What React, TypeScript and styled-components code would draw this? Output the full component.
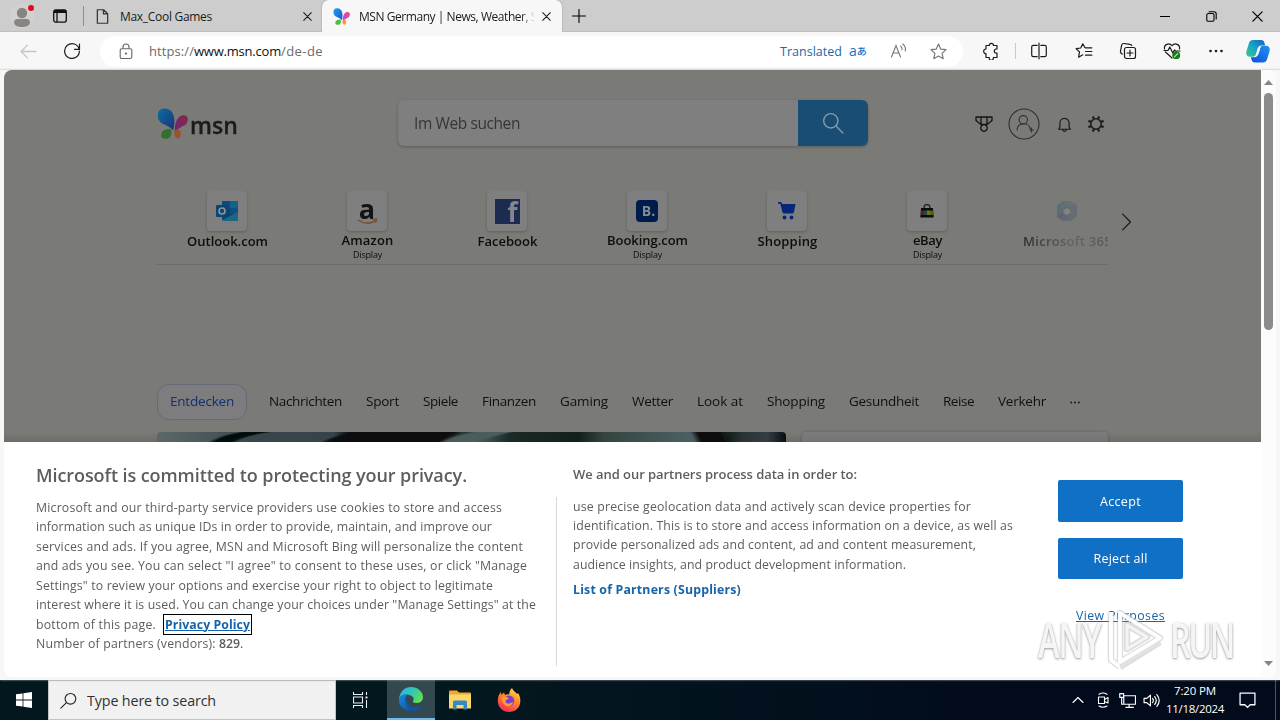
import React, { useLayoutEffect, useRef } from "react";
import styled, { createGlobalStyle } from "styled-components";

const Global = createGlobalStyle`
  * { box-sizing: border-box; }
  body { margin: 0; background: #f7f7f7; font-family: "Open Sans", "Noto Sans", sans-serif; }
  svg { display: block; flex: none; }
`;

const FitSpan = styled.span`
  display: inline-block;
  white-space: pre;
  text-decoration: inherit;
`;

/* Tracks its text in or out so that it fills exactly the given width. */
function Fit({ w, scale = 1, children }: { w: number; scale?: number; children: string }) {
  const ref = useRef<HTMLSpanElement>(null);
  useLayoutEffect(() => {
    const el = ref.current;
    if (!el) return;
    el.style.letterSpacing = "0px";
    const natural = el.getBoundingClientRect().width / scale;
    el.style.letterSpacing = `${(w - natural) / children.length}px`;
  }, [w, scale, children]);
  return <FitSpan ref={ref}>{children}</FitSpan>;
}

const Screen = styled.div`
  width: 1280px;
  height: 720px;
  display: flex;
  flex-direction: column;
  overflow: hidden;
`;

/* ---------- browser chrome ---------- */
const TabStrip = styled.div`
  height: 32px;
  flex: none;
  display: flex;
  background: #cdcdcd;
  box-shadow: inset 0 -1px 0 #bfbfbf;
`;
const Cell = styled.div<{ $w: number }>`
  width: ${(p) => p.$w}px;
  flex: none;
  display: flex;
  align-items: center;
  justify-content: center;
`;
const Tab = styled.div<{ $w: number; $active?: boolean }>`
  width: ${(p) => p.$w}px;
  flex: none;
  display: flex;
  align-items: center;
  padding-left: ${(p) => (p.$active ? 11 : 4)}px;
  padding-right: ${(p) => (p.$active ? 11 : 10)}px;
  font-size: 12px;
  color: #1b1b1b;
  border-radius: 7px 7px 0 0;
  background: ${(p) => (p.$active ? "#f7f7f7" : "transparent")};
  box-shadow: ${(p) => (p.$active ? "0 0 2px #999" : "none")};
  clip-path: inset(-3px -3px 0 -3px);
`;
const TabTitle = styled.div<{ $fade?: boolean }>`
  flex: 1;
  margin-left: ${(p) => (p.$fade ? 9 : 10)}px;
  overflow: hidden;
  white-space: nowrap;
  mask-image: ${(p) => (p.$fade ? "linear-gradient(90deg,#000 162px,transparent 176px)" : "none")};
`;
const Divider = styled.div<{ $h: number; $pull?: number }>`
  width: 1px;
  height: ${(p) => p.$h}px;
  margin-left: ${(p) => -(p.$pull ?? 0)}px;
  align-self: center;
  background: ${(p) => (p.$pull ? "#c9c9c9" : "#8f8f8f")};
`;
const Spacer = styled.div`
  flex: 1;
`;
const Toolbar = styled.div`
  height: 38px;
  flex: none;
  display: flex;
  background: #f7f7f7;
  align-items: center;
  color: #1b1b1b;
`;
const Address = styled.div`
  width: 863px;
  height: 31px;
  display: flex;
  align-items: center;
  border-radius: 16px;
  background: #fff;
  padding-left: 18px;
  font-size: 13px;
  color: #6b6b6b;
`;
const Url = styled.div`
  margin-left: 15px;
  white-space: nowrap;
  b { font-weight: 400; color: #111; }
`;
const Translated = styled.div`
  font-size: 12.5px;
  color: #1f66a8;
`;
const TranslateMark = styled.div`
  width: 19px;
  margin-left: 7px;
  font-size: 14px;
  line-height: 16px;
  color: #1672c4;
  white-space: nowrap;
  display: flex;
  align-items: center;
  span { font-family: "Noto Sans CJK JP", sans-serif; font-size: 10px; font-weight: 500; }
`;

/* ---------- page ---------- */
const Viewport = styled.div`
  position: relative;
  width: 1272px;
  height: 607px;
  margin-left: 4px;
  flex: none;
  display: flex;
  border-radius: 8px;
  overflow: hidden;
  background: #fff;
`;
const Frame = styled.div`
  flex: none;
  height: 610px;
  background: #f7f7f7;
  filter: drop-shadow(0 0 1px #aaa);
`;
const Document = styled.div`
  width: 1257px;
  display: flex;
  flex-direction: column;
`;
const Dimmed = styled.div`
  height: 372px;
  background: linear-gradient(#7a7a76 0 362px, #6c6c69 372px);
  padding: 30px 0 0 153px;
  display: flex;
  flex-direction: column;
  overflow: hidden;
`;
const Header = styled.div`
  display: flex;
  height: 46px;
  align-items: center;
`;
const Logo = styled.div`
  width: 241px;
  display: flex;
  align-items: center;
  color: #1c1c1c;
  font-size: 23px;
  font-weight: 600;
  line-height: 32px;
`;
const Wordmark = styled.div`
  margin: 4px 0 0 2px;
  -webkit-text-stroke: 0.3px #1c1c1c;
`;
const SearchBox = styled.div`
  width: 470px;
  height: 46px;
  display: flex;
  border-radius: 6px;
  overflow: hidden;
  background: #7f7f7f;
  box-shadow: 0 1px 3px rgba(0, 0, 0, 0.25);
`;
const SearchText = styled.div`
  width: 400px;
  padding-left: 16px;
  line-height: 47px;
  font-size: 15.5px;
  color: #363636;
`;
const SearchButton = styled.div`
  width: 70px;
  background: #1a4d73;
  display: flex;
  align-items: center;
  justify-content: center;
`;
const Tools = styled.div`
  display: flex;
  margin-left: 100px;
  height: 46px;
  padding-top: 2px;
`;
const Links = styled.div`
  display: flex;
  margin-top: 45px;
  height: 74px;
  flex: none;
  width: 951px;
  border-bottom: 1px solid #6b6b68;
`;
const LinkItem = styled.div<{ $faded?: boolean }>`
  width: 140px;
  flex: none;
  display: flex;
  flex-direction: column;
  align-items: center;
  color: #0d0d0d;
  mask-image: ${(p) => (p.$faded ? "linear-gradient(90deg,rgba(0,0,0,.75) 20px,rgba(0,0,0,.2) 75px,rgba(0,0,0,.3) 112px)" : "none")};
`;
const LinkRow = styled.div`
  display: flex;
  width: 951px;
  overflow: hidden;
  flex: none;
`;
const Tile = styled.div<{ $plain?: boolean }>`
  width: 40px;
  height: 40px;
  border-radius: 4px;
  display: flex;
  align-items: center;
  justify-content: center;
  background: ${(p) => (p.$plain ? "transparent" : "#7f7f7f")};
  box-shadow: ${(p) => (p.$plain ? "none" : "0 1px 3px rgba(0,0,0,.22)")};
`;
const LinkName = styled.div<{ $ad?: boolean }>`
  font-size: 13px;
  font-weight: 600;
  line-height: 18px;
  margin: ${(p) => (p.$ad ? 0 : 1)}px 0 0 1px;
  white-space: nowrap;
`;
const AdLabel = styled.div`
  font-size: 9px;
  line-height: 12px;
  margin-left: 1px;
`;
const Next = styled.div`
  margin-left: 9px;
  padding-top: 22px;
`;
const Nav = styled.div`
  display: flex;
  flex: none;
  align-items: center;
  margin-top: 119px;
  height: 36px;
  gap: 24px;
  font-size: 13.5px;
  line-height: 20px;
  color: #101010;
`;
const Pill = styled.div`
  width: 90px;
  height: 36px;
  margin-right: -2px;
  display: flex;
  align-items: center;
  justify-content: center;
  border: 1px solid #666b77;
  border-radius: 12px;
  background: #7d7d7f;
  color: #14306e;
`;
const NavText = styled.div`
  padding-bottom: 2px;
`;
const Cards = styled.div`
  display: flex;
  flex: none;
  gap: 16px;
  margin-top: 12px;
`;
const Photo = styled.div`
  width: 629px;
  height: 30px;
  border-radius: 4px;
  overflow: hidden;
`;
const Card = styled.div`
  width: 306px;
  height: 30px;
  border-radius: 4px;
  background: linear-gradient(#7c7c7c, #737373 10px);
  box-shadow: 0 0 3px rgba(0, 0, 0, 0.25);
`;

/* ---------- consent banner ---------- */
const Consent = styled.div`
  flex: 1;
  background: #fff;
  display: flex;
  padding: 20px 0 0 32px;
  color: #5d5d5d;
  font-size: 12.3px;
`;
const Left = styled.div`
  width: 520px;
`;
const Title = styled.div`
  font-size: 18px;
  font-weight: 600;
  line-height: 26px;
  margin-bottom: 10px;
`;
const Line = styled.div`
  height: 19.45px;
  line-height: 19.45px;
  white-space: nowrap;
  display: flex;
`;
const Rule = styled.div`
  width: 1px;
  height: 169px;
  margin-top: 35px;
  background: #d8d8d8;
`;
const Right = styled.div`
  width: 501px;
  padding-left: 16px;
`;
const Subtitle = styled.div`
  font-size: 13px;
  font-weight: 600;
  line-height: 24px;
  margin-bottom: 10.5px;
`;
const PolicyLink = styled.a`
  height: 21px;
  line-height: 19px;
  margin: -1px 0 0 7px;
  padding: 0 1px;
  border: 1px solid #000;
  color: #1564ab;
  font-weight: 700;
  text-decoration: underline;
`;
const PartnersLink = styled.a`
  display: block;
  margin-top: 7px;
  line-height: 18px;
  color: #1564ab;
  font-weight: 700;
`;
const Strong = styled.b`
  font-weight: 600;
`;
const Actions = styled.div`
  width: 125px;
  padding-top: 18px;
  display: flex;
  flex-direction: column;
  align-items: center;
`;
const ActionButton = styled.div<{ $h: number }>`
  width: 125px;
  height: ${(p) => p.$h}px;
  margin-bottom: 16px;
  border-radius: 2px;
  background: #1070c6;
  color: #fff;
  font-size: 12.5px;
  display: flex;
  align-items: center;
  justify-content: center;
`;
const Purposes = styled.a`
  margin-top: 12px;
  line-height: 18px;
  color: #1564ab;
  text-decoration: underline;
`;
const Scrollbar = styled.div`
  width: 15px;
  background: #fcfcfc;
  display: flex;
  flex-direction: column;
  align-items: center;
  padding: 10px 0 11px;
`;
const Thumb = styled.div`
  width: 9px;
  height: 237px;
  margin-top: 8px;
  border-radius: 5px;
  background: #8b8b8b;
`;

const Watermark = styled.div`
  position: absolute;
  left: 1034px;
  top: 537px;
  display: flex;
  align-items: center;
  width: 194px;
  height: 66px;
  justify-content: space-between;
  pointer-events: none;
`;
const MarkWord = styled.div`
  width: 62px;
  font-size: 48px;
  line-height: 60px;
  font-weight: 600;
  color: rgba(255, 255, 255, 0.9);
  text-shadow: 0 1px 3px #999, 0 0 1px #bbb;
  transform: scaleX(0.68);
  transform-origin: left;
  white-space: nowrap;
`;

/* ---------- taskbar ---------- */
const Taskbar = styled.div`
  height: 40px;
  flex: none;
  display: flex;
  background: linear-gradient(90deg, #03171f 0, #03171f 40%, #020b1b 80%);
  color: #fff;
`;
const TaskSearch = styled.div`
  width: 288px;
  display: flex;
  align-items: center;
  padding-left: 11px;
  background: #f1f1f1;
  border: 1px solid #c4c4c4;
  color: #303030;
  font-size: 14.3px;
`;
const SearchLabel = styled.div`
  margin-left: 10px;
`;
const RunningApp = styled(Cell)`
  background: #34484f;
  border-bottom: 2px solid #76b9ed;
`;
const Clock = styled.div`
  width: 64px;
  display: flex;
  flex-direction: column;
  align-items: center;
  font-size: 11.5px;
  line-height: 18px;
  padding-top: 2px;
`;
const EdgeLine = styled.div`
  width: 1px;
  margin-right: 4px;
  background: #4b535e;
`;

/* ---------- drawings ---------- */
const Stroke = ({ s = 16, w = 1.1, c = "currentColor", d, box = 16 }: { s?: number; w?: number; c?: string; d: string; box?: number }) => (
  <svg width={s} height={s} viewBox={`0 0 ${box} ${box}`} fill="none" stroke={c} strokeWidth={w} strokeLinecap="round" strokeLinejoin="round">
    <path d={d} />
  </svg>
);

const Butterfly = ({ w, id, dim }: { w: number; id: string; dim?: boolean }) => (
  <svg width={w} height={w} viewBox="0 0 30 30">
    <defs>
      <linearGradient id={`${id}a`} x1="0" y1="0" x2="0.8" y2="1">
        <stop offset="0" stopColor={dim ? "#0c6f9e" : "#16a3ee"} />
        <stop offset="1" stopColor={dim ? "#1a3580" : "#2558d8"} />
      </linearGradient>
      <linearGradient id={`${id}b`} x1="1" y1="0" x2="0" y2="1">
        <stop offset="0" stopColor={dim ? "#8e2444" : "#fa4878"} />
        <stop offset="1" stopColor={dim ? "#66297c" : "#c040d8"} />
      </linearGradient>
    </defs>
    <path d="M.8 7C.8 2 4.300.2 8 .5c6.500.5 8.800 6 8.800 12.500 0 3-.3 6-1.300 8.500C13 19 11 17.500 7 16 2.800 14.300.8 11 .8 7z" fill={`url(#${id}a)`} />
    <path d="M29.800 10.500c0-3-4-4.500-7.500-2.500-4 3-5 8-5 14 3-1 4-2.500 7-4 4-1.500 5.500-4 5.500-7.500z" fill={`url(#${id}b)`} />
    <path d="M4 26.500c0-4 4-6.500 9.500-6 1 3 .5 8-3 9-4 .8-6.500-.5-6.500-3z" fill={dim ? "#2f702a" : "#4cc03c"} />
    <path d="M16.500 23c1-2 4-3 6-1 1 3 .5 6.500-1.500 7.500-2.500.5-4.500-2-4.500-6.500z" fill={dim ? "#96542f" : "#ff9140"} />
  </svg>
);

const Close = ({ s = 9 }: { s?: number }) => <Stroke s={s} box={10} w={1.2} d="M.8.8l8.4 8.4M9.2.8L.8 9.2" />;

const Profile = () => (
  <svg width="32" height="28" viewBox="0 0 32 28">
    <circle cx="16" cy="14" r="12" fill="#d3d1d0" />
    <circle cx="16" cy="11" r="5.2" fill="#878583" />
    <path d="M8 20c0-2 2-3 3-3h10c1 0 3 1 3 3 0 4-4 5-8 5s-8-1-8-5z" fill="#878583" />
    <circle cx="25" cy="6" r="3" fill="#e00b1c" />
  </svg>
);

const Workspace = () => (
  <svg width="14" height="14" viewBox="0 0 14 14" fill="none" stroke="#111" strokeWidth="1.3">
    <rect x=".7" y=".9" width="12.6" height="12.2" rx="2" />
    <path d="M1 2.5h12" strokeWidth="3" />
    <path d="M4 3v10" />
  </svg>
);

const Reload = () => (
  <svg width="18" height="18" viewBox="0 0 18 18" fill="none" stroke="currentColor" strokeWidth="1.2" strokeLinecap="round">
    <path d="M16.2 7.3A7.4 7.4 0 1 0 16.4 9M16.5 2.2v5.2h-5" />
  </svg>
);

const Lock = () => (
  <svg width="16" height="17" viewBox="0 0 16 17" fill="none" stroke="#666" strokeWidth="1.1">
    <rect x="2.2" y="5.7" width="11.6" height="9.8" rx="1.6" />
    <path d="M5 5.5V4a3 3 0 0 1 6 0v1.5" />
    <circle cx="8" cy="10.6" r=".6" fill="#666" />
  </svg>
);

const starPath = "M8 1l2.1 4.7 5 .6-3.7 3.5 1 5L8 12.300 3.600 14.800l1-5L.9 6.300l5-.6z";

const ReadAloud = () => (
  <svg width="18" height="16" viewBox="0 0 18 16" fill="none" stroke="#777" strokeWidth="1.1" strokeLinecap="round">
    <path d="M1.500 14L6 2.500 10.500 14M3.200 10h5.600M10.500 3q2 1.500 1.500 4M12.700 1q3.500 2.500 2.600 7" />
  </svg>
);

const Puzzle = () => (
  <svg width="18" height="18" viewBox="-1 0 18 18" fill="none" stroke="currentColor" strokeWidth="1.2" strokeLinejoin="round">
    <path d="M3 3.500h3.300a2.100 2.100 0 1 1 4.200 0H14v3.500h-.6a2.100 2.100 0 1 0 0 4.200H14v4.300h-3.700a2.100 2.100 0 1 1-4 0H3v-3.800a2.350 2.350 0 0 1 0-4.700z" />
  </svg>
);

const Split = () => (
  <Stroke s={18} box={18} w={1.2} d="M7.200 3.300H3.300a1.600 1.600 0 0 0-1.600 1.600v8.200a1.600 1.600 0 0 0 1.600 1.600h3.900M10.800 3.300h3.900a1.600 1.600 0 0 1 1.600 1.600v8.200a1.600 1.600 0 0 1-1.600 1.600h-3.900M9 1.200v15.600" />
);

const Favorites = () => (
  <Stroke s={18} box={18} w={1.2} d="M10 5.700L7.800 1.800 5.700 6l-4.500.7 3.300 3.200-.9 5.300 4.200-2.400M10.500 5.800h6.300M10.500 9.500h6.300M10.500 13.200h6.300" />
);

const Collections = () => (
  <Stroke s={18} box={18} w={1.2} d="M7.500 5.500h7a2 2 0 0 1 2 2v7a2 2 0 0 1-2 2h-7a2 2 0 0 1-2-2v-7a2 2 0 0 1 2-2zM11 8v6M8 11h6M3.500 12A2.500 2.500 0 0 1 1.500 9L2.600 3.300A2.200 2.200 0 0 1 5 1.500l6 .8a2 2 0 0 1 1.700 1.200" />
);

const Health = () => (
  <svg width="18" height="18" viewBox="0 0 18 18" fill="none" stroke="currentColor" strokeWidth="1.2" strokeLinecap="round" strokeLinejoin="round">
    <path d="M1.500 7C.7 2.500 6 .3 9 3.700c3-3.400 8.300-1.200 7.500 3.300M2.500 10l6.500 6M1 8.500h4L6.800 5l3 6 1.700-3 1 1H17" />
    <circle cx="13.200" cy="13.200" r="3.900" fill="#137c14" stroke="none" />
    <path d="M11.500 14.800l3.200-3.200" stroke="#b9e5b3" />
  </svg>
);

const Copilot = () => (
  <svg width="24" height="23" viewBox="0 0 24 23">
    <defs>
      <linearGradient id="cpA" x1="0" y1="1" x2="1" y2="0">
        <stop offset="0" stopColor="#3cc98a" />
        <stop offset=".5" stopColor="#18a3c7" />
        <stop offset="1" stopColor="#1560c0" />
      </linearGradient>
      <linearGradient id="cpB" x1="0" y1="1" x2="1" y2="0">
        <stop offset="0" stopColor="#0b4fd8" />
        <stop offset="1" stopColor="#2592f2" />
      </linearGradient>
    </defs>
    <path d="M7 0h8c2 0 3 1 3.500 3l.6 2.500h-3c-3 0-4 1.500-4.700 4L10 14c-.6 2-1.500 2.700-3.500 2.700H4C1 16.700-.3 14.500.4 11.500L3 3c.6-2 2-3 4-3z" fill="url(#cpA)" />
    <path d="M17 22.500H9c-2 0-3-1-3.500-3l-.6-2.300h3c3 0 4-1.500 4.700-4L14 8.500c.6-2 1.500-2.700 3.500-2.700H20c3 0 4.300 2.200 3.600 5.200L21 19.500c-.6 2-2 3-4 3z" fill="url(#cpB)" />
    <path d="M10 15l1.500-5.300c.5-1.500 1.200-2.700 3-2.900l-1.500 5.500c-.5 1.500-1.200 2.600-3 2.700z" fill="#eefaff" />
  </svg>
);

const Magnifier = ({ s, c, flip, w = 1.3 }: { s: number; c: string; flip?: boolean; w?: number }) => (
  <Stroke s={s} c={c} w={w} box={20} d={flip ? "M7.600 12.400L1 19M6 8a6.300 6.300 0 1 0 12.600 0A6.300 6.300 0 1 0 6 8" : "M12.500 12.500L19 19M1.500 8a6.500 6.500 0 1 0 13 0 6.500 6.500 0 1 0-13 0"} />
);

const Medal = () => <Stroke s={18} box={18} w={1.3} c="#141414" d="M1 2h16v3.500L12 9.500H6L1 5.500zM6 2v7M12 2v7M5.700 13a3.300 3.300 0 1 0 6.600 0 3.300 3.300 0 1 0-6.600 0" />;

const Account = () => (
  <svg width="32" height="32" viewBox="0 0 32 32" fill="none" stroke="#303030" strokeWidth="1.1" strokeLinecap="round">
    <circle cx="16" cy="16" r="15" />
    <circle cx="15.300" cy="11.800" r="4.200" />
    <path d="M9 22c.6-8 12-8 13.200-1.500M21.500 22h4M23.500 20v4" />
  </svg>
);

const Bell = () => <Stroke s={17} c="#181818" w={1.1} d="M2.500 12.500h11l-1.200-2.200V6.500a4.300 4.300 0 0 0-8.600 0v3.800zM6.300 12.800a1.700 1.700 0 0 0 3.400 0" />;

const Gear = () => (
  <svg width="18" height="18" viewBox="-9 -9 18 18" fill="none" stroke="#202020">
    <circle r="5.200" strokeWidth="1.600" />
    {[22.5, 67.5, 112.5, 157.5, 202.5, 247.5, 292.5, 337.5].map((a) => (
      <path key={a} d="M0 -5.200v-3" strokeWidth="2.200" transform={`rotate(${a})`} />
    ))}
  </svg>
);

const Outlook = () => (
  <svg width="24" height="22" viewBox="0 0 24 22">
    <rect x="7" y="1" width="16" height="19" rx="1" fill="#0b426e" />
    <path d="M7 1h8v7H7z" fill="#0a4d7a" />
    <path d="M15 1h8v7h-8z" fill="#14618a" />
    <path d="M15 8h8v6h-8z" fill="#0d527f" />
    <path d="M7 20l16-8v8.500q0 .5-1 .5H8z" fill="#1b6784" />
    <rect x="1" y="5" width="12" height="12" rx="1" fill="#0a4573" />
    <circle cx="7" cy="11" r="3" fill="none" stroke="#8a9198" strokeWidth="1.700" />
  </svg>
);

const AmazonGlyph = styled.div`
  display: flex;
  flex-direction: column;
  align-items: center;
  font-size: 27px;
  font-weight: 700;
  line-height: 38px;
  color: #141414;
  margin-top: -8px;
  svg { margin-top: -10px; }
`;
const FacebookTile = styled.div`
  width: 25px;
  height: 25px;
  background: #1c2c50;
  color: #83868c;
  font: 700 26px/27px "Open Sans", sans-serif;
  text-align: right;
  padding-right: 2px;
`;
const BookingTile = styled.div`
  width: 22px;
  height: 22px;
  border-radius: 4px;
  background: #001c4b;
  color: #858b95;
  font: 700 14px/22px "Open Sans", sans-serif;
  text-align: center;
  padding-left: 3px;
`;

const Cart = () => (
  <svg width="20" height="20" viewBox="0 0 20 20" fill="#06267a">
    <path d="M1 1h2.500q1 0 1.300 1.200L5 3h13.500L17 11q-.3 1.500-1.800 1.500H7.300q-1.500 0-1.900-1.500L3.300 2.800H1z" />
    <circle cx="7.500" cy="16.500" r="1.900" />
    <circle cx="14.500" cy="16.500" r="1.900" />
  </svg>
);

const Bag = () => (
  <svg width="14" height="14" viewBox="0 0 14 14">
    <path d="M4 4.500V3.500a3 3 0 0 1 6 0v1" fill="none" stroke="#222" strokeWidth="1.300" />
    <path d="M1 4h12l.7 9.500H.3z" fill="#0b0b0b" />
    <path d="M1 6.500h3V11H1z" fill="#6a1822" />
    <path d="M4 6.500h3V11H4z" fill="#1f4a40" />
    <path d="M7 6.500h3V11H7z" fill="#6d7a12" />
    <path d="M10 6.500h3V11h-3z" fill="#4c6418" />
  </svg>
);

const M365 = () => (
  <svg width="24" height="24" viewBox="0 0 24 24">
    <path d="M8 2h7l7 4v11l-6 5H8l-6-4V7z" fill="#22386c" />
    <path d="M8 2h7l5 4-9 2-5 6-4 3V7z" fill="#1e5a74" />
    <path d="M12 9l3.500 2v3L12 16l-3.500-2v-3z" fill="#9b9ba0" />
  </svg>
);

const links = [
  { name: "Outlook.com", w: 81, icon: <Outlook /> },
  {
    name: "Amazon",
    w: 52,
    ad: true,
    icon: (
      <AmazonGlyph>
        a
        <svg width="21" height="7" viewBox="0 0 21 7" fill="none" stroke="#765034" strokeWidth="1.500">
          <path d="M1 2q9 6 17 1M16 1.500l3.500-.3-1 3.500" />
        </svg>
      </AmazonGlyph>
    ),
  },
  { name: "Facebook", w: 60, icon: <FacebookTile>f</FacebookTile> },
  { name: "Booking.com", w: 81, ad: true, icon: <BookingTile>B.</BookingTile> },
  { name: "Shopping", w: 60, icon: <Cart /> },
  { name: "eBay", w: 29, ad: true, icon: <Bag /> },
  { name: "Microsoft 365", w: 89, faded: true, icon: <M365 /> },
];

const sections: [string, number][] = [
  ["Nachrichten", 73],
  ["Sport", 33],
  ["Spiele", 35],
  ["Finanzen", 54],
  ["Gaming", 48],
  ["Wetter", 41],
  ["Look at", 46],
  ["Shopping", 58],
  ["Gesundheit", 70],
  ["Reise", 31],
  ["Verkehr", 48],
];

const privacy: [string, number][] = [
  ["Microsoft and our third-party service providers use cookies to store and access", 466],
  ["information such as unique IDs in order to provide, maintain, and improve our", 456],
  ['services and ads. If you agree, MSN and Microsoft Bing will personalize the content', 487],
  ['and ads you see. You can select "I agree" to consent to these uses, or click "Manage', 491],
  ['Settings" to review your options and exercise your right to object to legitimate', 457],
  ['interest where it is used. You can change your choices under "Manage Settings" at the', 500],
];

const purposes: [string, number][] = [
  ["use precise geolocation data and actively scan device properties for", 398],
  ["identification. This is to store and access information on a device, as well as", 440],
  ["provide personalized ads and content, ad and content measurement,", 403],
  ["audience insights, and product development information.", 333],
];

const Scenery = () => (
  <svg width="629" height="30" viewBox="0 0 629 30">
    <defs>
      <linearGradient id="scene" x1="0" x2="1" y1="0" y2="0">
        <stop offset="0" stopColor="#5d676a" />
        <stop offset=".1" stopColor="#465356" />
        <stop offset=".15" stopColor="#39464a" />
        <stop offset=".28" stopColor="#36444a" />
        <stop offset=".31" stopColor="#070c0f" />
        <stop offset=".45" stopColor="#0b1415" />
        <stop offset=".52" stopColor="#425553" />
        <stop offset=".56" stopColor="#1b2a27" />
        <stop offset=".67" stopColor="#12201c" />
        <stop offset=".71" stopColor="#34443f" />
        <stop offset=".84" stopColor="#4b5f62" />
        <stop offset=".86" stopColor="#4b5f62" />
        <stop offset=".91" stopColor="#152119" />
        <stop offset=".93" stopColor="#293235" />
        <stop offset=".97" stopColor="#343e45" />
        <stop offset="1" stopColor="#0b0d10" />
      </linearGradient>
      <filter id="soft" x="-10%" y="-50%" width="120%" height="200%">
        <feGaussianBlur stdDeviation="2 .6" />
      </filter>
    </defs>
    <rect width="629" height="30" fill="url(#scene)" />
    <g filter="url(#soft)">
      <path d="M52 11Q66 2 92 -1h30Q85 3 76 11z" fill="#06090a" />
      <path d="M165 11Q182 1 205 -1H305Q292 3 282 11z" fill="#080e10" />
      <path d="M284 11Q295 3 325 -1h35Q335 4 318 11z" fill="#4b5b5b" />
      <path d="M536 -1h30l6 12h-30z" fill="#0a100f" />
    </g>
  </svg>
);

const Windows = () => (
  <svg width="16" height="16" viewBox="0 0 16 16" fill="#fff">
    <path d="M0 2.300L6.600 1.400v6.200H0zM7.400 1.300L16 0v7.600H7.400zM0 8.400h6.600v6.200L0 13.700zM7.400 8.400H16V16l-8.600-1.300z" />
  </svg>
);

const TaskView = () => (
  <svg width="18" height="16" viewBox="0 0 18 16" fill="none" stroke="#e8eef0" strokeWidth="1.100">
    <path d="M.5 0v2.500h9V0M.5 5h9v6h-9zM.5 16v-2.500h9V16M13.500 0v3M13.500 8v8" />
    <rect x="12.500" y="4.500" width="2" height="2" fill="#e8eef0" stroke="none" />
  </svg>
);

const EdgeLogo = () => (
  <svg width="24" height="24" viewBox="0 0 24 24">
    <defs>
      <linearGradient id="edA" x1="0" y1="0" x2="1" y2=".4">
        <stop offset="0" stopColor="#2bb5e8" />
        <stop offset=".6" stopColor="#35c5b5" />
        <stop offset="1" stopColor="#5fdc5a" />
      </linearGradient>
      <linearGradient id="edB" x1="0" y1="0" x2="1" y2="1">
        <stop offset="0" stopColor="#1b87dc" />
        <stop offset="1" stopColor="#0c4f9c" />
      </linearGradient>
    </defs>
    <path d="M0 12C1 4 6 0 12 0c7 0 12 5 12 10 0 4-3 6-6.500 6-3 0-4-1-3.500-2 1-1 1-3-.5-4.500C10 6.500 2 7 0 12z" fill="url(#edA)" />
    <path d="M0 12C1 8 5 6.800 9 7.300 6 9 5.500 14 8 18c2 3.500 5 5 8 5C8 26-1 20 0 12z" fill="url(#edB)" />
    <path d="M9 10c-2 3-1 7 2 9 3.500 2.200 8 1.500 10.500-.5.500-.3 1 .2.700.7C20 22.500 17 24 14 24 8 23 4 16 9 10z" fill="#12579f" />
  </svg>
);

const Folder = () => (
  <svg width="22" height="20" viewBox="0 0 22 20">
    <path d="M0 1.500Q0 .5 1 .5h7l2 2h11q1 0 1 1V18H0z" fill="#f0a92c" />
    <path d="M0 4.500h22V18.500H0z" fill="#fbd66b" />
    <path d="M4 19.500V12q0-1.500 1.500-1.500h11Q18 10.500 18 12v7.500h-3.500V15h-7v4.500z" fill="#3787c4" />
  </svg>
);

const Firefox = () => (
  <svg width="24" height="24" viewBox="0 0 24 24">
    <defs>
      <linearGradient id="fx" x1=".8" y1="0" x2=".3" y2="1">
        <stop offset="0" stopColor="#ffe14a" />
        <stop offset=".45" stopColor="#ff8a2a" />
        <stop offset="1" stopColor="#f5275c" />
      </linearGradient>
    </defs>
    <path d="M15 0c1 3 4 4 5 6l1-1c2 3 2.500 6 2.300 8.500C23 20 18 24 12 24S.8 19.500.8 13C.8 9 2 6 4 4l.5 3L7 4.500 8 7q2-1 4-.5C12.500 4 13 2 15 0z" fill="url(#fx)" />
    <circle cx="12" cy="12.800" r="5.300" fill="#7a3fd0" />
    <path d="M5 9c3-1 5 0 7 1.500-1 1-3 1-3.500 2.500 0 2 2 3 4 2.500s3-1.500 3.500-1C15 18 11 19 8.500 17.500 5.500 16 4.500 12 5 9z" fill="#ff9a2c" />
  </svg>
);

const MeetNow = () => <Stroke s={16} w={1.1} d="M3.500 5h6v6.500h-6zM9.500 7.500L13 5.500v5.500L9.500 9.500M4 2.300q4-2.500 8 0M4 14q4 2.500 8 0" />;
const Network = () => <Stroke s={17} w={1.1} d="M4.500 3.500h11v8h-11zM9.500 11.500v3M6.500 14.500h7M.7 1.500h3.600v3.500H.7zM2.500 5v6.500h2" />;
const Volume = () => <Stroke s={17} w={1.1} d="M1 6v4h2.500L7 13V3L3.500 6zM9 6q1.500 2 0 4M11 4.300q3 3.700 0 7.400M13 2.500q4.500 5.500 0 11" />;

const PlayMark = () => (
  <svg width="58" height="66" viewBox="0 0 58 66" fill="none" strokeLinejoin="round">
    <g stroke="#b4b4b4" strokeWidth="6.500" opacity=".45">
      <path d="M5 5v48l9 7M14 6L54 31 14 55zM21 18l20 12-20 12z" />
      <path d="M14 60l40-25" />
    </g>
    <g stroke="#fff" strokeWidth="3.800">
      <path d="M5 5v48l9 7" />
      <path d="M14 6L54 31 14 55z" />
    </g>
    <path d="M21 18l20 12-20 12z" stroke="#f4f4f4" strokeWidth="3" />
    <path d="M14 60l40-25" stroke="#e2e2e2" strokeWidth="3.500" />
  </svg>
);

export default function App() {
  return (
    <Screen>
      <Global />
      <TabStrip>
        <Cell $w={44}><Profile /></Cell>
        <Cell $w={32}><Workspace /></Cell>
        <Cell $w={15}><Divider $h={20} /></Cell>
        <Tab $w={231}>
          <Stroke s={15} w={1.3} c="#333" d="M2.500.8h6.700l4.300 4.300v10.100h-11zM9 1v4.300h4.300" />
          <TabTitle><Fit w={92}>Max_Cool Games</Fit></TabTitle>
          <Close />
        </Tab>
        <Tab $w={240} $active>
          <Butterfly w={17} id="fav" />
          <TabTitle $fade><Fit w={178}>MSN Germany | News, Weather, S</Fit></TabTitle>
          <Close />
        </Tab>
        <Cell $w={34}><Stroke s={14} box={14} d="M7 .5v13M.5 7h13" /></Cell>
        <Spacer />
        <Cell $w={46}><Stroke s={10} box={10} d="M0 5.500h10" /></Cell>
        <Cell $w={46}><Stroke s={11} box={11} d="M2.500 2.500h4q1.500 0 1.500 1.500v5q0 1.200-1.200 1.200H2Q.8 10.200.8 9V4Q.8 2.500 2.500 2.500zM3 .8h5Q10.200.8 10.200 3v5" /></Cell>
        <Cell $w={46}><Close s={11} /></Cell>
      </TabStrip>

      <Toolbar>
        <Cell $w={56}><Stroke s={17} c="#c5c5c5" w={1.2} d="M15 8H1M7 2L1 8l6 6" /></Cell>
        <Cell $w={32}><Reload /></Cell>
        <Cell $w={12} />
        <Address>
          <Lock />
          <Url>
            <Fit w={45}>https://</Fit>
            <b><Fit w={87}>www.msn.com</Fit></b>
            <Fit w={42}>/de-de</Fit>
          </Url>
          <Spacer />
          <Translated><Fit w={62}>Translated</Fit></Translated>
          <TranslateMark>a<span>あ</span></TranslateMark>
          <Cell $w={61}><ReadAloud /></Cell>
          <Cell $w={18}><Stroke s={17} c="#777" d={starPath} /></Cell>
          <Cell $w={16} />
        </Address>
        <Cell $w={56}><Puzzle /></Cell>
        <Divider $h={16} $pull={4} />
        <Cell $w={46}><Split /></Cell>
        <Cell $w={44}><Favorites /></Cell>
        <Cell $w={44}><Collections /></Cell>
        <Cell $w={44}><Health /></Cell>
        <Cell $w={44}>
          <svg width="14" height="4" viewBox="0 0 14 4" fill="#1b1b1b"><circle cx="1.500" cy="2" r="1.300" /><circle cx="7" cy="2" r="1.300" /><circle cx="12.500" cy="2" r="1.300" /></svg>
        </Cell>
        <Cell $w={40}><Copilot /></Cell>
      </Toolbar>

      <Frame>
        <Viewport>
          <Document>
            <Dimmed>
              <Header>
                <Logo>
                  <Butterfly w={31} id="logo" dim />
                  <Wordmark><Fit w={48}>msn</Fit></Wordmark>
                </Logo>
                <SearchBox>
                  <SearchText><Fit w={106}>Im Web suchen</Fit></SearchText>
                  <SearchButton><Magnifier s={22} c="#8299aa" /></SearchButton>
                </SearchBox>
                <Tools>
                  <Cell $w={32}><Medal /></Cell>
                  <Cell $w={48}><Account /></Cell>
                  <Cell $w={33}><Bell /></Cell>
                  <Cell $w={30}><Gear /></Cell>
                </Tools>
              </Header>
              <Links>
                <LinkRow>
                  {links.map((l) => (
                    <LinkItem key={l.name} $faded={l.faded}>
                      <Tile $plain={l.faded}>{l.icon}</Tile>
                      <LinkName $ad={l.ad}><Fit w={l.w}>{l.name}</Fit></LinkName>
                      {l.ad && <AdLabel><Fit w={29}>Display</Fit></AdLabel>}
                    </LinkItem>
                  ))}
                </LinkRow>
                <Next><Stroke s={18} c="#1c1c1c" w={1.1} d="M5 1l7 7-7 7" /></Next>
              </Links>
              <Nav>
                <Pill><NavText><Fit w={64}>Entdecken</Fit></NavText></Pill>
                {sections.map(([name, w]) => <NavText key={name}><Fit w={w}>{name}</Fit></NavText>)}
                <svg width="10" height="3" viewBox="0 0 10 3" fill="#1b1b1b"><circle cx="1.200" cy="1.500" r="1" /><circle cx="5" cy="1.500" r="1" /><circle cx="8.800" cy="1.500" r="1" /></svg>
              </Nav>
              <Cards>
                <Photo><Scenery /></Photo>
                <Card />
              </Cards>
            </Dimmed>

            <Consent>
              <Left>
                <Title><Fit w={431}>Microsoft is committed to protecting your privacy.</Fit></Title>
                {privacy.map(([t, w]) => <Line key={t}><Fit w={w}>{t}</Fit></Line>)}
                <Line>
                  <Fit w={120}>bottom of this page.</Fit>
                  <PolicyLink><Fit w={85}>Privacy Policy</Fit></PolicyLink>
                </Line>
                <Line>
                  <Fit w={183}>{"Number of partners (vendors): "}</Fit>
                  <Strong><Fit w={21}>829</Fit></Strong>.
                </Line>
              </Left>
              <Rule />
              <Right>
                <Subtitle><Fit w={284}>We and our partners process data in order to:</Fit></Subtitle>
                {purposes.map(([t, w]) => <Line key={t}><Fit w={w}>{t}</Fit></Line>)}
                <PartnersLink><Fit w={168}>List of Partners (Suppliers)</Fit></PartnersLink>
              </Right>
              <Actions>
                <ActionButton $h={42}><Fit w={41}>Accept</Fit></ActionButton>
                <ActionButton $h={41}><Fit w={54}>Reject all</Fit></ActionButton>
                <Purposes><Fit w={89}>View Purposes</Fit></Purposes>
              </Actions>
            </Consent>
          </Document>
          <Scrollbar>
            <svg width="9" height="5" viewBox="0 0 9 5" fill="#858585"><path d="M4.500 0L9 5H0z" /></svg>
            <Thumb />
            <Spacer />
            <svg width="9" height="5" viewBox="0 0 9 5" fill="#858585"><path d="M0 0h9L4.500 5z" /></svg>
          </Scrollbar>
          <Watermark>
            <MarkWord><Fit w={92} scale={0.68}>ANY</Fit></MarkWord>
            <PlayMark />
            <MarkWord><Fit w={92} scale={0.68}>RUN</Fit></MarkWord>
          </Watermark>
        </Viewport>
      </Frame>

      <Taskbar>
        <Cell $w={48}><Windows /></Cell>
        <TaskSearch>
          <Magnifier s={17} c="#222" flip />
          <SearchLabel><Fit w={129}>Type here to search</Fit></SearchLabel>
        </TaskSearch>
        <Cell $w={51}><TaskView /></Cell>
        <RunningApp $w={48}><EdgeLogo /></RunningApp>
        <Cell $w={50}><Folder /></Cell>
        <Cell $w={48}><Firefox /></Cell>
        <Spacer />
        <Cell $w={26}><Stroke s={12} box={12} d="M1 8.500l5-5 5 5" /></Cell>
        <Cell $w={24}><MeetNow /></Cell>
        <Cell $w={24}><Network /></Cell>
        <Cell $w={24}><Volume /></Cell>
        <Clock>
          <Fit w={42}>7:20 PM</Fit>
          <Fit w={58}>11/18/2024</Fit>
        </Clock>
        <Cell $w={40}><Stroke s={17} w={1.2} d="M1 1h14v11h-4.500L8 14.500 5.500 12H1z" /></Cell>
        <Cell $w={8} />
        <EdgeLine />
      </Taskbar>
    </Screen>
  );
}
